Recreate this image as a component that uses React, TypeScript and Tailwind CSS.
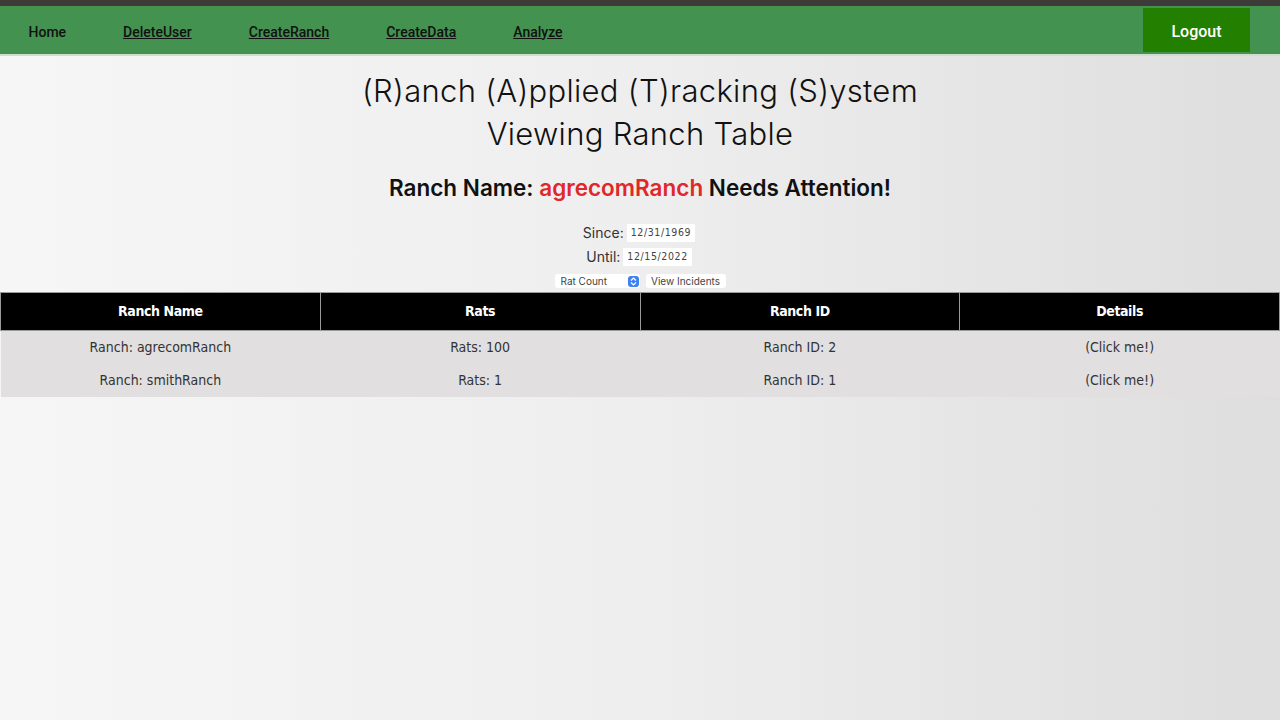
import React from "react";

export default function App() {
  const rows = [
    ["Ranch: agrecomRanch", "Rats: 100", "Ranch ID: 2", "(Click me!)"],
    ["Ranch: smithRanch", "Rats: 1", "Ranch ID: 1", "(Click me!)"],
  ];
  const tableFont = { fontFamily: '"DejaVu Sans Condensed", "DejaVu Sans", sans-serif' };
  return (
    <div className="w-[1280px] h-[720px] overflow-hidden flex flex-col bg-[linear-gradient(90deg,#f6f6f6_0%,#eeeeee_50%,#dedede_100%)]">
      <div className="h-[6px] bg-[#3e3a37]" />
      <nav
        className="h-[50px] bg-[#43924f] flex items-center justify-between border-b-2 border-[#cfdccf]"
        style={{ fontFamily: "Roboto, sans-serif" }}
      >
        <div className="flex items-center text-[14px] font-medium text-[#111] pt-[4px]">
          <a className="px-[28.5px]">Home</a>
          <a className="px-[28.5px] underline">DeleteUser</a>
          <a className="px-[28.5px] underline">CreateRanch</a>
          <a className="px-[28.5px] underline">CreateData</a>
          <a className="px-[28.5px] underline">Analyze</a>
        </div>
        <button className="mr-[30px] w-[107px] h-[44px] mt-[2px] self-start bg-[#237f00] text-white text-[16px] font-medium pt-[3px]">
          Logout
        </button>
      </nav>
      <div className="flex flex-col items-center" style={{ fontFamily: "Inter, sans-serif" }}>
        <h1 className="mt-[13px] text-[31px] font-light leading-[43px] text-[#111] tracking-[0.3px]">
          (R)anch (A)pplied (T)racking (S)ystem
        </h1>
        <h2 className="text-[31px] font-light leading-[43px] text-[#111] tracking-[0.3px]">Viewing Ranch Table</h2>
        <h3 className="mt-[19px] text-[22.5px] font-semibold leading-[28px] text-[#111]">
          Ranch Name: <span className="text-[#e02828]">agrecomRanch</span> Needs Attention!
        </h3>
        <div className="mt-[20px] flex flex-col items-center gap-[3px] text-[14px] text-[#333]">
          <div className="flex items-center gap-[3px] pr-[2px]">
            <span>Since:</span>
            <span className="bg-white px-[4px] h-[18px] flex items-center text-[10.5px] tracking-[0.6px] text-[#444]" style={tableFont}>
              12/31/1969
            </span>
          </div>
          <div className="flex items-center gap-[3px] pr-[2px]">
            <span>Until:</span>
            <span className="bg-white px-[4px] h-[18px] flex items-center text-[10.5px] tracking-[0.6px] text-[#444]" style={tableFont}>
              12/15/2022
            </span>
          </div>
          <div className="flex items-center gap-[6px] mt-[4px] text-[10px] text-[#444]">
            <div className="w-[85px] h-[14px] bg-white rounded-[3px] flex items-center justify-between pl-[6px] pr-[1px]">
              <span>Rat Count</span>
              <span className="w-[11px] h-[11px] bg-[#3d82f0] rounded-[3px] flex items-center justify-center">
                <svg width="7" height="9" viewBox="0 0 7 9">
                  <path d="M1 3.5 L3.5 1 L6 3.5 M1 5.5 L3.5 8 L6 5.5" stroke="white" strokeWidth="1.2" fill="none" />
                </svg>
              </span>
            </div>
            <div className="w-[80px] h-[14px] bg-white rounded-[3px] flex items-center justify-center">
              View Incidents
            </div>
          </div>
        </div>
      </div>
      <table className="mt-[4px] w-[1280px] border-collapse table-fixed" style={tableFont}>
        <thead>
          <tr className="bg-black text-white text-[14px] font-bold h-[38px]">
            {["Ranch Name", "Rats", "Ranch ID", "Details"].map((h, i) => (
              <th key={i} className="border border-[#9a9a9a] font-bold tracking-[-0.4px]">
                {h}
              </th>
            ))}
          </tr>
        </thead>
        <tbody>
          {rows.map((r, i) => (
            <tr key={i} className="bg-[#e1dfdf] text-[14px] text-[#333] h-[33px]">
              {r.map((c, j) => (
                <td key={j} className="text-center">
                  {c}
                </td>
              ))}
            </tr>
          ))}
        </tbody>
      </table>
    </div>
  );
}
